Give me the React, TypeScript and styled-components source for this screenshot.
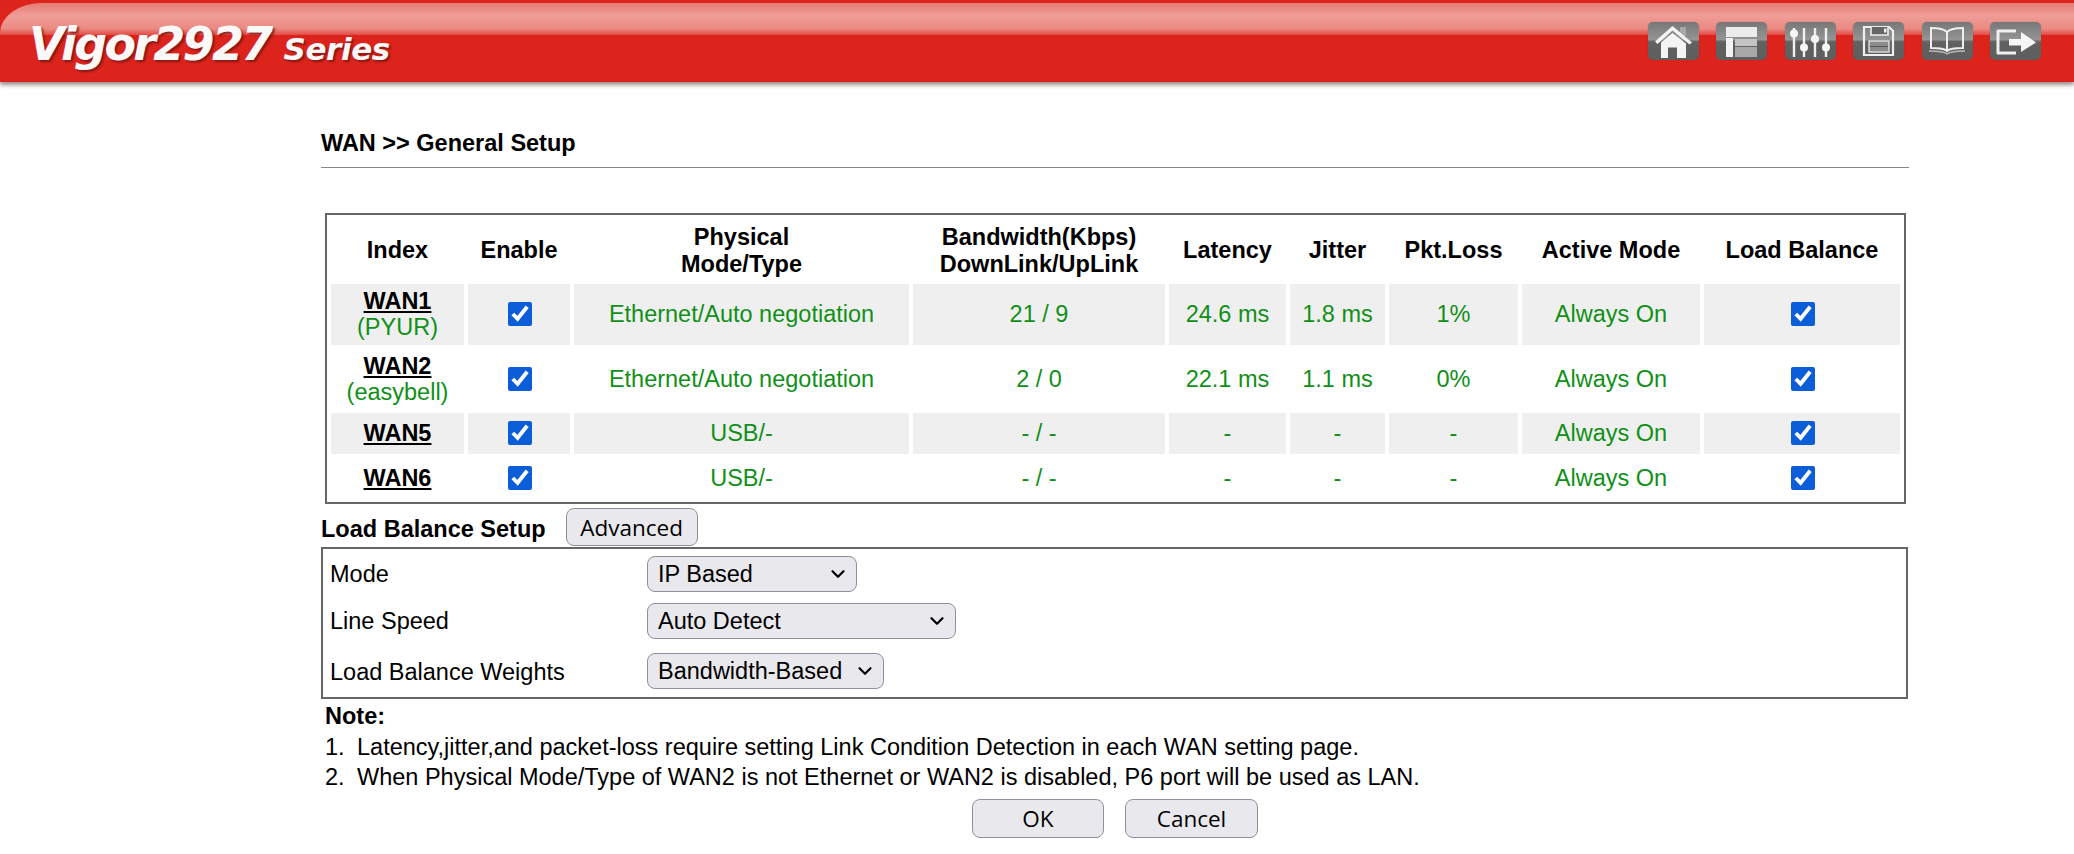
import styled, { createGlobalStyle } from "styled-components";
import { ChevronDown } from "lucide-react";

const GlobalStyle = createGlobalStyle`
  body {
    margin: 0;
    background: #fff;
    color: #000;
    font-family: "Liberation Sans", Arial, sans-serif;
    font-size: 23.5px;
  }
`;

const wanRows = [
  { name: "WAN1", alias: "(PYUR)", mode: "Ethernet/Auto negotiation", bandwidth: "21 / 9", latency: "24.6 ms", jitter: "1.8 ms", loss: "1%", height: 61, shaded: true },
  { name: "WAN2", alias: "(easybell)", mode: "Ethernet/Auto negotiation", bandwidth: "2 / 0", latency: "22.1 ms", jitter: "1.1 ms", loss: "0%", height: 64, shaded: false },
  { name: "WAN5", alias: "", mode: "USB/-", bandwidth: "- / -", latency: "-", jitter: "-", loss: "-", height: 41, shaded: true },
  { name: "WAN6", alias: "", mode: "USB/-", bandwidth: "- / -", latency: "-", jitter: "-", loss: "-", height: 44, shaded: false },
];

const HomeIcon = () => (
  <IconSvg viewBox="0 0 51 38">
    <path d="M32 5h6v9h-6z" fill="#a8a8a8" />
    <path d="M7 19.5 24.5 4 44 20.5l-2.5 2L24.5 8.5 9.5 22z" fill="#f4f4f4" />
    <path d="M13 20.5 24.5 11 38 21.5V36H29V25.5H20V36h-7z" fill="#f4f4f4" />
  </IconSvg>
);

const LayoutIcon = () => (
  <IconSvg viewBox="0 0 51 38">
    <rect x="10" y="5" width="31" height="10" fill="#ececec" />
    <rect x="10" y="16" width="7" height="19" fill="#f2f2f2" />
    <rect x="19" y="17" width="22" height="7" fill="#c4c4c4" />
    <rect x="19" y="25" width="22" height="10" fill="#a8a8a8" />
  </IconSvg>
);

const SlidersIcon = () => (
  <IconSvg viewBox="0 0 51 38">
    <g stroke="#f0f0f0" strokeWidth="2.4">
      <path d="M9 6v29M19 6v29M30 6v29M41 6v29" />
    </g>
    <g fill="#f6f6f6">
      <circle cx="9" cy="11.5" r="4" />
      <circle cx="19" cy="25.5" r="4" />
      <circle cx="30" cy="17" r="4" />
      <circle cx="41" cy="25.5" r="4" />
    </g>
  </IconSvg>
);

const SaveIcon = () => (
  <IconSvg viewBox="0 0 51 38">
    <path d="M11 5h25l4 4v24H11z" fill="none" stroke="#eee" strokeWidth="2.2" />
    <path d="M18 5v8h17V5" fill="#666" stroke="#eee" strokeWidth="1.6" />
    <rect x="31" y="6.5" width="2.5" height="4" fill="#eee" />
    <rect x="16" y="19" width="20" height="11" fill="#8c8c8c" stroke="#ddd" strokeWidth="1.4" />
    <path d="M17 24.5h18" stroke="#555" strokeWidth="1" />
  </IconSvg>
);

const BookIcon = () => (
  <IconSvg viewBox="0 0 51 38">
    <g fill="none" stroke="#eee" strokeWidth="2">
      <path d="M25 10c-3-3-10-4-16-4v20c6 0 13 0 16 3 3-3 10-3 16-3V6c-6 0-13 1-16 4zM25 10v19" />
    </g>
    <g fill="none" stroke="#b8b8b8" strokeWidth="1.3">
      <path d="M7 29c7 0 14 0 18 3 4-3 11-3 18-3" />
    </g>
  </IconSvg>
);

const ExitIcon = () => (
  <IconSvg viewBox="0 0 51 38">
    <path d="M26 9H8v22h18" fill="none" stroke="#f0f0f0" strokeWidth="3" strokeLinejoin="round" />
    <path d="M19 17h12V10l15 10.5L31 30v-6.5H19z" fill="#f6f6f6" />
  </IconSvg>
);

const toolbarIcons = [HomeIcon, LayoutIcon, SlidersIcon, SaveIcon, BookIcon, ExitIcon];

const App = () => {
  return (
    <>
      <GlobalStyle />
      <Header>
        <Logo>
          <LogoName>Vigor2927</LogoName>
          <LogoSeries>Series</LogoSeries>
        </Logo>
        <Toolbar>
          {toolbarIcons.map((Icon, i) => (
            <ToolButton key={i}>
              <Icon />
            </ToolButton>
          ))}
        </Toolbar>
      </Header>
      <Main>
        <Title>WAN &gt;&gt; General Setup</Title>
        <WanTable>
          <thead>
            <tr>
              <HeadCell $width={133}>Index</HeadCell>
              <HeadCell $width={102}>Enable</HeadCell>
              <HeadCell $width={335}>
                Physical
                <br />
                Mode/Type
              </HeadCell>
              <HeadCell $width={252}>
                Bandwidth(Kbps)
                <br />
                DownLink/UpLink
              </HeadCell>
              <HeadCell $width={117}>Latency</HeadCell>
              <HeadCell $width={95}>Jitter</HeadCell>
              <HeadCell $width={129}>Pkt.Loss</HeadCell>
              <HeadCell $width={178}>Active Mode</HeadCell>
              <HeadCell $width={196}>Load Balance</HeadCell>
            </tr>
          </thead>
          <tbody>
            {wanRows.map((row) => (
              <tr key={row.name}>
                <Cell $shaded={row.shaded} $height={row.height}>
                  <WanLink href="#">{row.name}</WanLink>
                  {row.alias && <Alias>{row.alias}</Alias>}
                </Cell>
                <Cell $shaded={row.shaded} $height={row.height}>
                  <Check type="checkbox" defaultChecked />
                </Cell>
                <Cell $shaded={row.shaded} $height={row.height}>{row.mode}</Cell>
                <Cell $shaded={row.shaded} $height={row.height}>{row.bandwidth}</Cell>
                <Cell $shaded={row.shaded} $height={row.height}>{row.latency}</Cell>
                <Cell $shaded={row.shaded} $height={row.height}>{row.jitter}</Cell>
                <Cell $shaded={row.shaded} $height={row.height}>{row.loss}</Cell>
                <Cell $shaded={row.shaded} $height={row.height}>Always On</Cell>
                <Cell $shaded={row.shaded} $height={row.height}>
                  <Check type="checkbox" defaultChecked />
                </Cell>
              </tr>
            ))}
          </tbody>
        </WanTable>
        <SetupHeading>
          <SetupTitle>Load Balance Setup</SetupTitle>
          <PushButton $width={132} $height={38}>Advanced</PushButton>
        </SetupHeading>
        <SetupBox>
          <SetupRow $height={47}>
            <SetupLabel>Mode</SetupLabel>
            <SelectWrap $width={210}>
              <Select defaultValue="ip">
                <option value="ip">IP Based</option>
              </Select>
              <Chevron size={22} strokeWidth={2.4} />
            </SelectWrap>
          </SetupRow>
          <SetupRow $height={50}>
            <SetupLabel>Line Speed</SetupLabel>
            <SelectWrap $width={309}>
              <Select defaultValue="auto">
                <option value="auto">Auto Detect</option>
              </Select>
              <Chevron size={22} strokeWidth={2.4} />
            </SelectWrap>
          </SetupRow>
          <SetupRow $height={43}>
            <SetupLabel $nudge={1}>Load Balance Weights</SetupLabel>
            <SelectWrap $width={237}>
              <Select defaultValue="bw">
                <option value="bw">Bandwidth-Based</option>
              </Select>
              <Chevron size={22} strokeWidth={2.4} />
            </SelectWrap>
          </SetupRow>
        </SetupBox>
        <Notes>
          <strong>Note:</strong>
          <NoteItem>
            <span>1.</span>
            <span>Latency,jitter,and packet-loss require setting Link Condition Detection in each WAN setting page.</span>
          </NoteItem>
          <NoteItem>
            <span>2.</span>
            <span>When Physical Mode/Type of WAN2 is not Ethernet or WAN2 is disabled, P6 port will be used as LAN.</span>
          </NoteItem>
        </Notes>
        <Actions>
          <PushButton $width={132} $height={39}>OK</PushButton>
          <PushButton $width={133} $height={39}>Cancel</PushButton>
        </Actions>
      </Main>
    </>
  );
};

export default App;

const Header = styled.header`
  position: relative;
  height: 82px;
  display: flex;
  align-items: center;
  justify-content: space-between;
  padding: 0 33px 0 29px;
  background: #dc241c;
  box-shadow: 0 3px 4px rgba(60, 30, 30, 0.5);

  &::before {
    content: "";
    position: absolute;
    top: 3px;
    left: 0;
    right: 0;
    height: 32px;
    border-top-left-radius: 42px 30px;
    background: linear-gradient(#e67c75, #f09d97 40%, #ea8a83 80%, #e34a42);
  }
`;

const Logo = styled.div`
  position: relative;
  display: flex;
  align-items: baseline;
  gap: 13px;
  padding-top: 5px;
  color: #fbf8f8;
  font-family: "DejaVu Sans", sans-serif;
  font-weight: 700;
  font-style: italic;
  text-shadow: 2px 2px 2px rgba(110, 20, 20, 0.75);
`;

const LogoName = styled.span`
  font-size: 46px;
  letter-spacing: -2.7px;
`;

const LogoSeries = styled.span`
  font-size: 31px;
  letter-spacing: -0.4px;
`;

const Toolbar = styled.nav`
  position: relative;
  display: flex;
  gap: 17.4px;
`;

const ToolButton = styled.div`
  width: 51px;
  height: 38px;
  border-radius: 5px;
  background: linear-gradient(#777 0%, #949494 46%, #616161 52%, #5e5e5e 100%);
  box-shadow: 0 0 1px rgba(60, 60, 60, 0.6);
`;

const IconSvg = styled.svg`
  display: block;
  width: 51px;
  height: 38px;
  filter: blur(0.4px);
`;

const Main = styled.main`
  width: 1588px;
  margin-left: 321px;
`;

const Title = styled.h1`
  margin: 0 0 45px;
  padding: 48px 0 10px;
  border-bottom: 1px solid #888;
  font-size: 23.5px;
  line-height: 27px;
  font-weight: 700;
`;

const WanTable = styled.table`
  width: 1581px;
  margin-left: 4px;
  border: 2px solid #666;
  border-spacing: 4px 2px;
  table-layout: fixed;
  font-size: 23.5px;
`;

const HeadCell = styled.th<{ $width: number }>`
  box-sizing: border-box;
  width: ${(p) => p.$width}px;
  height: 65px;
  padding: 2px 0 0;
  line-height: 27px;
  font-weight: 700;
  text-align: center;
`;

const Cell = styled.td<{ $shaded: boolean; $height: number }>`
  box-sizing: border-box;
  height: ${(p) => p.$height}px;
  padding: 0 0 ${(p) => (p.$shaded ? 1 : 0)}px;
  background: ${(p) => (p.$shaded ? "#efefef" : "#fff")};
  color: #109018;
  line-height: 26px;
  text-align: center;
  vertical-align: middle;
`;

const WanLink = styled.a`
  display: block;
  color: #000;
  font-weight: 700;
  text-decoration: underline;
`;

const Alias = styled.span`
  display: block;
`;

const Check = styled.input`
  display: block;
  width: 24px;
  height: 24px;
  margin: 0 auto;
  accent-color: #0b5ed7;
  transform: translateX(1px);
`;

const SetupHeading = styled.div`
  display: flex;
  align-items: center;
  gap: 20px;
  margin-top: 4px;
`;

const SetupTitle = styled.strong`
  padding-top: 4px;
`;

const PushButton = styled.button<{ $width: number; $height: number }>`
  width: ${(p) => p.$width}px;
  height: ${(p) => p.$height}px;
  padding: 0;
  border: 1px solid #8f8f9d;
  border-radius: 8px;
  background: #e9e9ed;
  color: #000;
  font-family: "Open Sans", sans-serif;
  font-size: 22.5px;
`;

const SetupBox = styled.div`
  margin-top: 1px;
  padding: 7px 7px 0;
  width: 1587px;
  box-sizing: border-box;
  border: 2px solid #666;
  height: 152px;
`;

const SetupRow = styled.div<{ $height: number }>`
  display: grid;
  grid-template-columns: 317px 1fr;
  align-items: start;
  height: ${(p) => p.$height}px;
`;

const SetupLabel = styled.span<{ $nudge?: number }>`
  padding-top: ${(p) => p.$nudge ?? 0}px;
  line-height: 36px;
`;

const SelectWrap = styled.div<{ $width: number }>`
  position: relative;
  width: ${(p) => p.$width}px;
  height: 36px;
`;

const Select = styled.select`
  display: block;
  width: 100%;
  height: 100%;
  padding: 0 0 0 10px;
  appearance: none;
  border: 1px solid #8f8f9d;
  border-radius: 8px;
  background-color: #e9e9ed;
  color: #000;
  font-family: "Liberation Sans", Arial, sans-serif;
  font-size: 23.5px;
`;

const Chevron = styled(ChevronDown)`
  position: absolute;
  top: 7px;
  right: 8px;
  pointer-events: none;
`;

const Notes = styled.div`
  margin-left: 4px;
  line-height: 30.5px;
  padding-top: 2px;

  strong {
    display: block;
  }
`;

const NoteItem = styled.div`
  display: grid;
  grid-template-columns: 32px 1fr;
`;

const Actions = styled.div`
  display: flex;
  justify-content: center;
  gap: 21px;
  margin-top: 6px;
`;
